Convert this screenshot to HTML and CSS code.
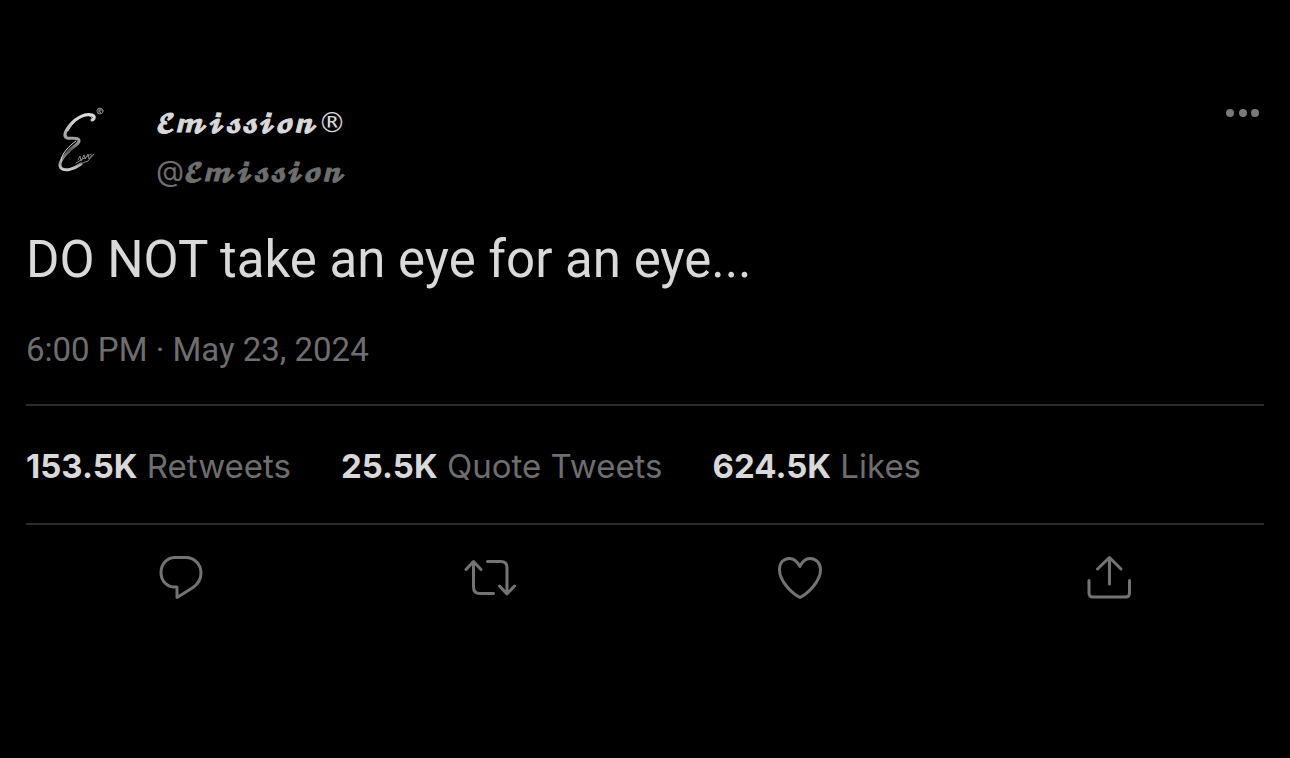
FILE: index.html
```
<!DOCTYPE html>
<html lang="en">
<head>
    <meta charset="UTF-8">
    <meta name="viewport" content="width=device-width, initial-scale=1.0">
    <title>Emission on Twitter</title>
    <link rel="stylesheet" href="styles.css">
</head>
<body>
    <article class="tweet">
        <header class="tweet-header">
            <svg class="avatar" viewBox="0 0 96 96" role="img" aria-label="Emission logo">
                <defs>
                    <linearGradient id="chrome" x1="0" y1="0" x2="0" y2="1">
                        <stop offset="0" stop-color="#ddd"/>
                        <stop offset="0.5" stop-color="#999"/>
                        <stop offset="0.65" stop-color="#555"/>
                        <stop offset="1" stop-color="#ccc"/>
                    </linearGradient>
                </defs>
                <g fill="none" stroke-linecap="round" stroke-linejoin="round">
                    <path stroke="url(#chrome)" stroke-width="3" d="M66 28c3-1 3-4 0-5c-7-2-16 3-21 9c-6 7-8 12-4 14c4 1 10-1 12 2c1 4-6 6-11 12c-7 7-10 12-7 16c4 4 13 1 20-4"/>
                    <path stroke="#ddd" stroke-width="1" d="M66 26c-1-3-6-3-10-1c-6 3-12 9-14 14M50 49c-7 5-15 13-15 20"/>
                    <path stroke="#888" stroke-width="1" d="M50 71l15-9M52 68l2-4l1 5l3-6l1 4l3-5l1 5l3-4M51 73l11-4l6-7"/>
                    <circle cx="74" cy="19" r="3" stroke="#888" stroke-width="1"/>
                    <path stroke="#888" stroke-width="1" d="M73 21v-4h2v2h-2l2 2"/>
                </g>
            </svg>
            <div class="author">
                <a class="name" href="#"><span class="script">𝓔𝓶𝓲𝓼𝓼𝓲𝓸𝓷</span><span class="reg">®</span></a>
                <a class="handle" href="#">@<span class="script">𝓔𝓶𝓲𝓼𝓼𝓲𝓸𝓷</span></a>
            </div>
            <button class="more-btn" type="button" aria-label="More">
                <svg viewBox="0 0 34 10"><circle cx="4" cy="5" r="4"/><circle cx="17" cy="5" r="4"/><circle cx="29" cy="5" r="4"/></svg>
            </button>
        </header>

        <p class="tweet-text">DO NOT take an eye for an eye...</p>
        <time class="tweet-date" datetime="2024-05-23T18:00">6:00 PM · May 23, 2024</time>

        <div class="stats">
            <a href="#"><strong>153.5K</strong> Retweets</a>
            <a href="#"><strong>25.5K</strong> Quote Tweets</a>
            <a href="#"><strong>624.5K</strong> Likes</a>
        </div>

        <div class="actions">
            <button type="button" aria-label="Reply">
                <svg viewBox="0 0 54 54"><path d="M23 36h-2C13 36 7 30 7 21.500S13 6.500 21 6.500h11C40 6.500 47 13 47 22c0 6-3 11-8 14.500L23 46.500z"/></svg>
            </button>
            <button type="button" aria-label="Retweet">
                <svg viewBox="0 0 54 54"><path d="M3 18.500l7.500-8l7.500 8M10.500 11v25q0 6.500 6.500 6.500h13.500M24.500 10.500H38q6 0 6 6v26M36.500 35l7.500 8l7.500-8"/></svg>
            </button>
            <button type="button" aria-label="Like">
                <svg viewBox="0 0 54 54"><path d="M27 15.500C24 10 20.500 7.500 16.500 7.500C10 7.500 6.500 12.500 6.500 19c0 11 12 23 20.500 27.500C35.500 42 47.500 30 47.500 19c0-6.500-4-11.500-10.500-11.500c-4 0-7.500 2.500-10 8z"/></svg>
            </button>
            <button type="button" aria-label="Share">
                <svg viewBox="0 0 54 54"><path d="M15.500 18L27.500 6.500L39 18M27.500 7v26M7 29.500V42q0 4 4 4h32.500q4 0 4-4V29.500"/></svg>
            </button>
        </div>
    </article>
</body>
</html>
```
FILE: styles.css
```
body {
    font-family: Inter, "Liberation Sans", sans-serif;
    background-color: #000;
    color: #d9d9d9;
    margin: 0;
    padding: 0;
}

a {
    color: inherit;
    text-decoration: none;
}

button {
    background: none;
    border: none;
    padding: 0;
    cursor: pointer;
}

svg {
    display: block;
}

.tweet {
    padding: 92px 26px 0;
}

/* Header */
.tweet-header {
    display: flex;
    align-items: flex-start;
}

.avatar {
    width: 96px;
    height: 96px;
    margin-right: 34px;
}

.author {
    display: flex;
    flex-direction: column;
    padding-top: 5px;
    font-size: 29px;
    line-height: 49px;
}

.handle {
    color: #6e6e6e;
}

.script {
    font-family: "DejaVu Math TeX Gyre", "DejaVu Serif", serif;
    font-size: 24px;
    line-height: 0;
    -webkit-text-stroke: 1px currentColor;
}

.reg {
    font-family: "DejaVu Sans", sans-serif;
    font-size: 28px;
    line-height: 0;
}

.more-btn {
    margin: 16px 4px 0 auto;
}

.more-btn svg {
    width: 34px;
    height: 10px;
    fill: #7a7a7a;
}

/* Text */
.tweet-text {
    margin: 33px 0 0;
    font-family: Roboto, "Liberation Sans", sans-serif;
    font-size: 51px;
    line-height: 64px;
}

.tweet-date {
    display: block;
    margin-top: 38px;
    color: #6e6e6e;
    font-family: Roboto, "Liberation Sans", sans-serif;
    font-size: 33px;
    line-height: 40px;
}

/* Stats */
.stats {
    display: flex;
    gap: 50px;
    margin-top: 34px;
    padding: 40px 0 36px;
    border-top: 2px solid #2b2b2b;
    border-bottom: 2px solid #2b2b2b;
    color: #6e6e6e;
    font-size: 33px;
    line-height: 41px;
}

.stats strong {
    color: #d9d9d9;
}

/* Actions */
.actions {
    display: grid;
    grid-template-columns: repeat(4, 1fr);
    justify-items: center;
    padding-top: 26px;
}

.actions svg {
    width: 54px;
    height: 54px;
    fill: none;
    stroke: #737373;
    stroke-width: 3;
    stroke-linecap: round;
    stroke-linejoin: round;
}
```
